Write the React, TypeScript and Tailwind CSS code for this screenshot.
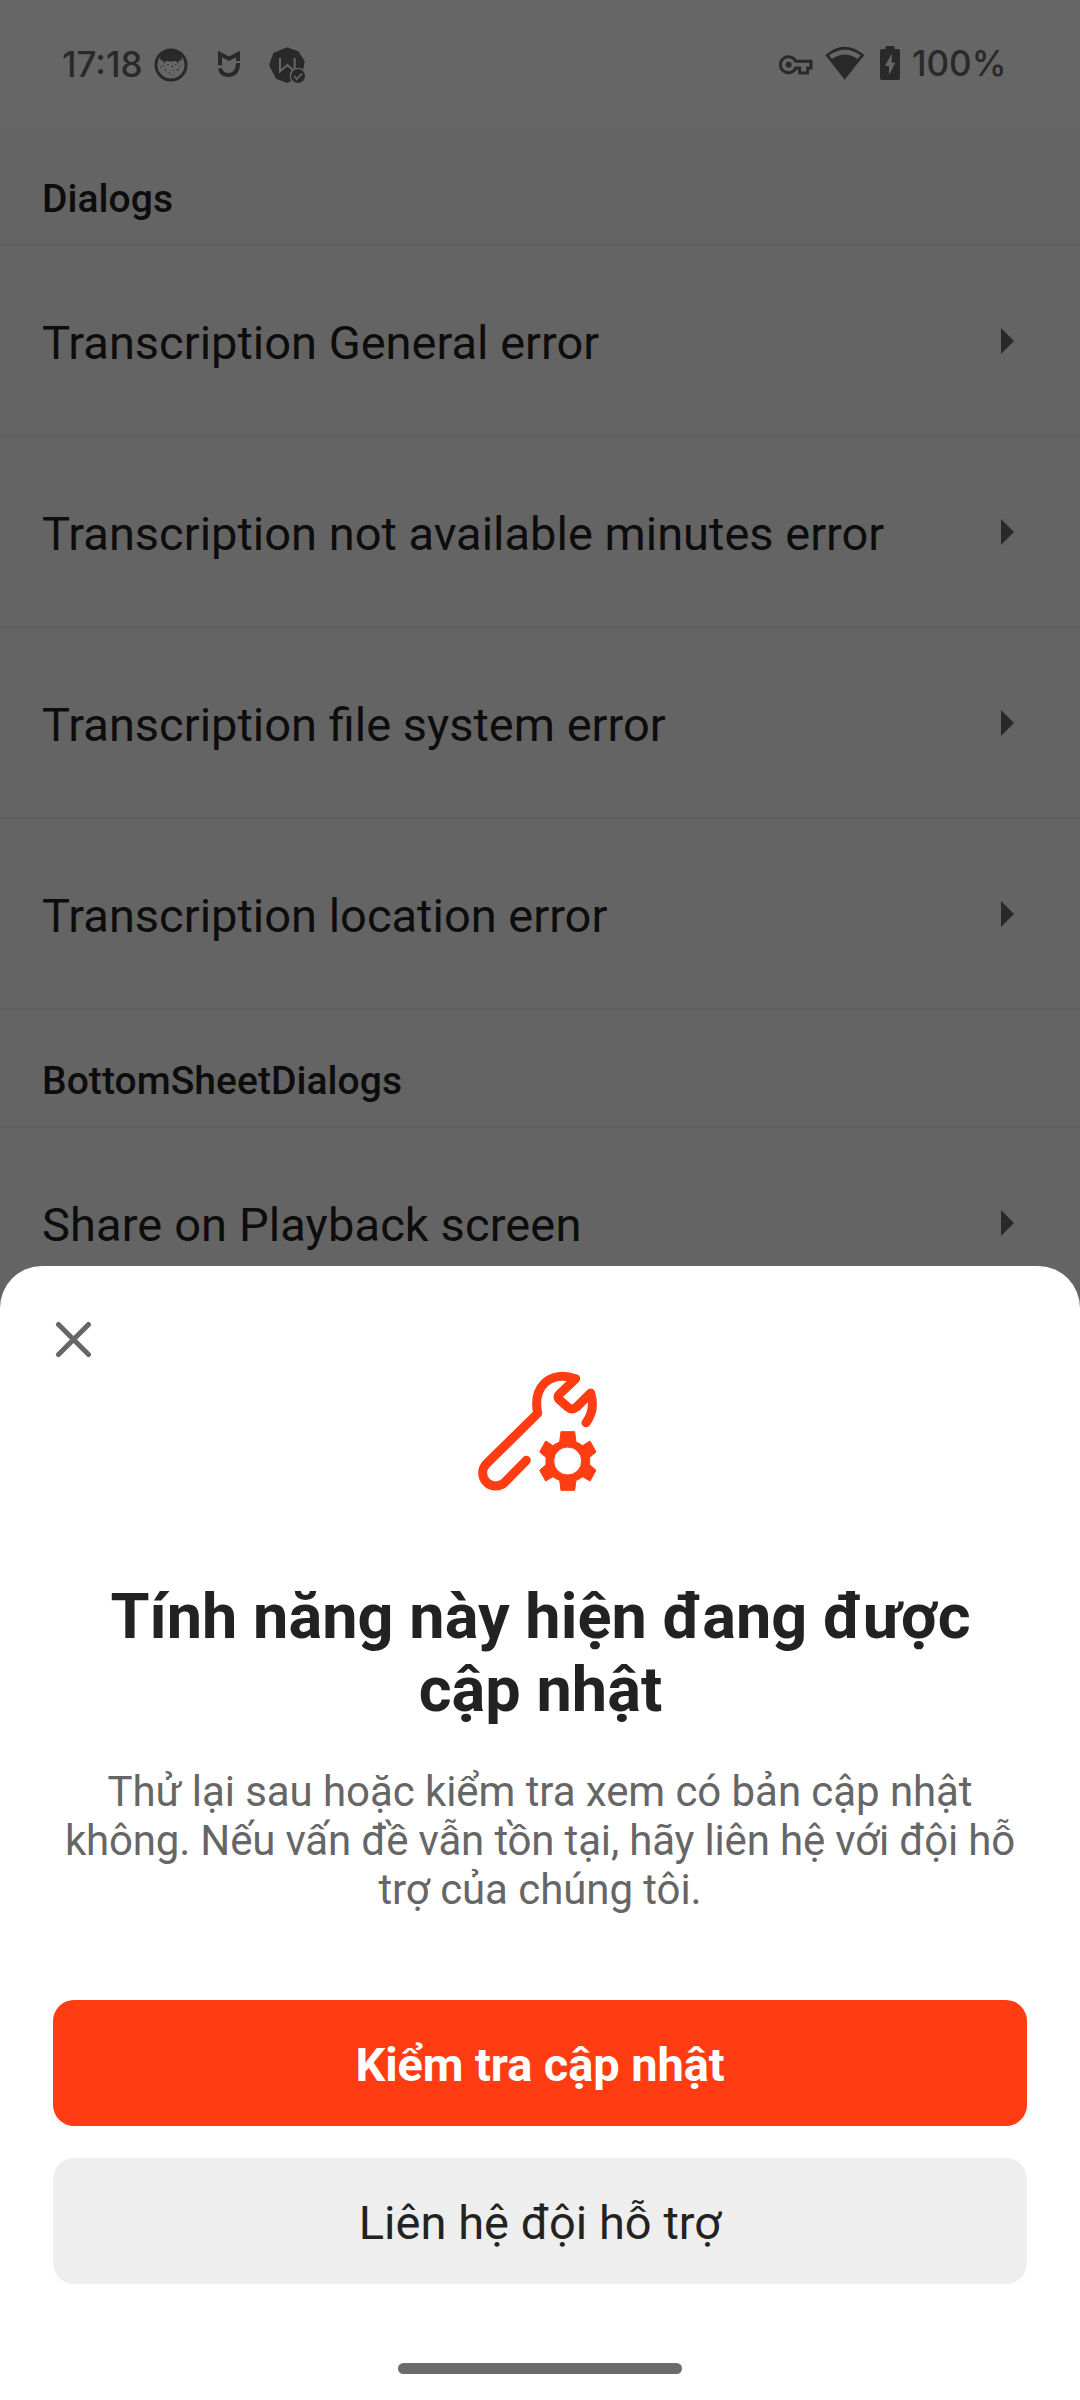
import React from "react";

function FaceIcon() {
  return (
    <svg className="h-[34px] w-[34px]" viewBox="342 83 102 102">
      <circle cx="393" cy="134" r="45" fill="none" stroke="#666" strokeWidth="9" />
      <path
        fill="#666"
        d="M360 106Q375 86 393 88Q411 86 426 106L424 120L416 122L414 130Q411 123 405 121Q393 126 381 121Q375 123 373 130L369 121L361 119Z"
      />
      <g fill="#666">
        <circle cx="362" cy="140" r="2" />
        <circle cx="370" cy="136" r="2" />
        <circle cx="384" cy="133" r="2" />
        <circle cx="397" cy="138" r="2.5" />
        <circle cx="407" cy="132" r="2" />
        <circle cx="420" cy="138" r="2" />
        <circle cx="376" cy="149" r="2.5" />
        <circle cx="389" cy="158" r="2" />
        <circle cx="401" cy="150" r="2" />
        <circle cx="413" cy="148" r="2.5" />
        <circle cx="399" cy="165" r="2" />
      </g>
    </svg>
  );
}

function ShieldIcon() {
  return (
    <svg className="h-[26px] w-[22px]" viewBox="534 94 66 78" fill="none" stroke="#666" strokeWidth="12">
      <path d="M540 137V103L567 117L594 103V124" />
      <path d="M540 146Q543 166 567 166Q594 164 594 130" />
    </svg>
  );
}

function VerifiedIcon() {
  return (
    <svg className="h-9 w-9" viewBox="687 80 108 108">
      <path fill="#666" d="M741 81L775 93L794 122L790 147Q752 150 753 182L741 188L708 175L687 135L700 98Z" />
      <path d="M720 113V153L742 134L764 153V113" fill="none" stroke="#fff" strokeWidth="6" />
      <circle cx="774" cy="167" r="25" fill="#fff" />
      <circle cx="774" cy="167" r="21" fill="#666" />
      <path d="M762 167L770 176L786 160" fill="none" stroke="#fff" strokeWidth="5" />
    </svg>
  );
}

function KeyIcon() {
  return (
    <svg className="h-[20px] w-[34px]" viewBox="56 104 102 60">
      <path
        d="M106 123A24 24 0 1 0 106 143H118V158H142V143H152V123Z"
        fill="none"
        stroke="#666"
        strokeWidth="9"
      />
      <circle cx="85" cy="133" r="9" fill="#666" />
    </svg>
  );
}

function WifiIcon() {
  return (
    <svg className="h-[34px] w-[40px]" viewBox="194 79 120 102">
      <path fill="#666" d="M195 106Q253 57 312 106L253 180Z" />
      <path fill="#fff" d="M206 107Q253 73 301 107L292 118Q253 91 215 118Z" />
    </svg>
  );
}

function BatteryIcon() {
  return (
    <svg className="h-[34px] w-5" viewBox="360 78 60 102">
      <path fill="#666" d="M377 78H403V87H415Q420 87 420 92V175Q420 180 415 180H365Q360 180 360 175V92Q360 87 365 87H377Z" />
      <path fill="#fff" d="M395 101L375 138H387V165L406 128H395Z" />
    </svg>
  );
}

function StatusBar() {
  return (
    <header className="flex h-32 items-start bg-white pl-[62px] pt-[42px] font-['Inter'] font-medium text-[#666]">
      <span className="w-[85px] whitespace-nowrap text-[35px] leading-[44px]">17:18</span>
      <div className="ml-[7px] mt-[6px]">
        <FaceIcon />
      </div>
      <div className="ml-[30px] mt-[9px]">
        <ShieldIcon />
      </div>
      <div className="ml-[29px] mt-[5px]">
        <VerifiedIcon />
      </div>
      <div className="ml-[474px] mt-[13px]">
        <KeyIcon />
      </div>
      <div className="ml-[12px] mt-1">
        <WifiIcon />
      </div>
      <div className="ml-[15px] mt-1">
        <BatteryIcon />
      </div>
      <span className="ml-[12px] text-[35px] leading-[42px]">100%</span>
    </header>
  );
}

function SectionHeader({ title }: { title: string }) {
  return (
    <h2 className="flex h-[118px] items-center border-b-2 border-[#eeeeee] bg-[#fafafa] pl-[42px] pt-[25px] text-[39px] font-medium leading-[46px] tracking-[0.05px] text-[#222]">
      {title}
    </h2>
  );
}

function Row({ label }: { label: string }) {
  return (
    <div className="flex h-[191px] items-center justify-between border-b-2 border-[#eeeeee] bg-[#fafafa] pl-[42px] pr-[66px]">
      <span className="pt-[3px] text-[47px] leading-[55px] text-[#222]">{label}</span>
      <svg className="h-[26px] w-[13px]" viewBox="0 0 13 26">
        <path d="M0 0L13 13L0 26Z" fill="#666" />
      </svg>
    </div>
  );
}

function RepairIcon() {
  return (
    <svg className="h-[120px] w-[120px]" viewBox="113 94 360 360">
      <path
        d="M437 249C458 222 460 190 451 160L409 202Q395 213 383 203L357 180Q350 172 357 164L406 117C370 105 335 108 312 131C289 154 286 190 292 221L138.4 372.4A39 39 0 0 0 193.6 427.6L258 362"
        fill="none"
        stroke="#ff3c12"
        strokeWidth="27"
        strokeLinecap="round"
        strokeLinejoin="round"
      />
      <path
        fillRule="evenodd"
        fill="#ff3c12"
        stroke="#ff3c12"
        strokeWidth="3"
        strokeLinejoin="round"
        d="M362 276H403L407 307Q418 311 427 318L449 304L467 337L448 353V375L467 392L449 424L427 411Q418 418 407 422L403 452H362L358 422Q347 418 338 411L316 424L298 392L317 375V353L298 337L316 304L338 318Q347 311 358 307ZM382 322A42 42 0 1 0 382 406A42 42 0 1 0 382 322Z"
      />
    </svg>
  );
}

function UpdateSheet() {
  return (
    <section className="absolute inset-x-0 bottom-0 flex h-[1134px] flex-col rounded-t-[42px] bg-white px-[53px]">
      <button className="ml-[2px] mt-[55px] h-[37px] w-[37px]" aria-label="Đóng">
        <svg className="h-[37px] w-[37px]" viewBox="0 0 37 37" stroke="#666" strokeWidth="5" strokeLinecap="round">
          <path d="M3.500 3.500L33.500 33.500M33.500 3.500L3.500 33.500" />
        </svg>
      </button>
      <div className="ml-[425px] mt-[13px]">
        <RepairIcon />
      </div>
      <h1 className="mt-[89px] pl-px text-center text-[63px] font-bold leading-[73px] tracking-[0.04px] text-[#222]">
        Tính năng này hiện đang được
        <br />
        cập nhật
      </h1>
      <p className="mt-[41px] whitespace-nowrap text-center text-[42px] leading-[49px] text-[#666]">
        <span className="tracking-[-0.07px]">Thử lại sau hoặc kiểm tra xem có bản cập nhật</span>
        <br />
        <span className="tracking-[-0.17px]">không. Nếu vấn đề vẫn tồn tại, hãy liên hệ với đội hỗ</span>
        <br />
        <span className="tracking-[-0.07px]">trợ của chúng tôi.</span>
      </p>
      <div className="mt-auto flex flex-col gap-8">
        <button className="h-[126px] rounded-[21px] bg-[#ff3c12] pt-1 text-[47px] font-bold tracking-[-0.1px] text-white">
          Kiểm tra cập nhật
        </button>
        <button className="h-[126px] rounded-[21px] bg-[#eeeeee] pt-1 text-[47px] tracking-[0.04px] text-[#222]">
          Liên hệ đội hỗ trợ
        </button>
      </div>
      <div className="mx-auto mb-[26px] mt-[79px] h-[11px] w-[284px] rounded-full bg-[#6b6b6b]" />
    </section>
  );
}

export default function App() {
  return (
    <main className="relative h-[2400px] w-[1080px] overflow-hidden bg-[#fafafa] font-['Roboto',sans-serif]">
      <StatusBar />
      <SectionHeader title="Dialogs" />
      <Row label="Transcription General error" />
      <Row label="Transcription not available minutes error" />
      <Row label="Transcription file system error" />
      <Row label="Transcription location error" />
      <SectionHeader title="BottomSheetDialogs" />
      <div className="tracking-[0.12px]">
        <Row label="Share on Playback screen" />
      </div>
      <div className="absolute inset-0 bg-black/60" />
      <UpdateSheet />
    </main>
  );
}
